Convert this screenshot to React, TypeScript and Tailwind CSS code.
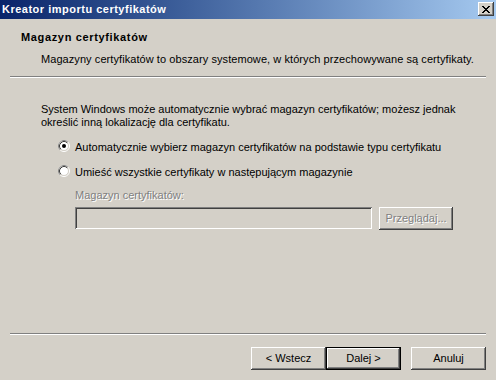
import React from "react";

const raised =
  "shadow-[inset_-1px_-1px_#404040,inset_1px_1px_#ffffff,inset_-2px_-2px_#808080,inset_2px_2px_#d4d0c8]";
const sunken =
  "shadow-[inset_1px_1px_#808080,inset_-1px_-1px_#ffffff,inset_2px_2px_#404040,inset_-2px_-2px_#d4d0c8]";

function Radio({ checked }: { checked?: boolean }) {
  return (
    <svg width="12" height="12" viewBox="0 0 12 12" className="shrink-0">
      <circle cx="6" cy="6" r="5.5" fill="none" stroke="#ffffff" strokeWidth="1" />
      <path d="M2.11 9.89 A5.5 5.5 0 0 1 9.89 2.11" fill="none" stroke="#808080" strokeWidth="1" />
      <circle cx="6" cy="6" r="4.5" fill="#ffffff" stroke="#d4d0c8" strokeWidth="1" />
      <path d="M2.82 9.18 A4.5 4.5 0 0 1 9.18 2.82" fill="none" stroke="#404040" strokeWidth="1" />
      {checked && <circle cx="6" cy="6" r="2" fill="#000000" />}
    </svg>
  );
}

function Btn({ label, def, disabled, className }: { label: string; def?: boolean; disabled?: boolean; className?: string }) {
  return (
    <div
      className={`flex items-center justify-center bg-[#d4d0c8] ${raised} ${def ? "border border-black" : ""} ${className ?? ""}`}
    >
      <span className={disabled ? "text-[#808080] [text-shadow:1px_1px_0_#ffffff]" : "text-black"}>{label}</span>
    </div>
  );
}

export default function App() {
  return (
    <div className="w-[496px] h-[380px] bg-[#d4d0c8] flex flex-col font-['Liberation_Sans',Arial,sans-serif] text-[11px] leading-[13px] text-black overflow-hidden">
      {/* Title bar */}
      <div className="h-[19px] flex items-start bg-gradient-to-r from-[#0a246a] to-[#a6caf0] shrink-0">
        <div className="pl-[2px] pt-[3px] font-bold tracking-[0.5px] text-white flex-1">Kreator importu certyfikatów</div>
        <div className={`mt-[2px] mr-[2px] w-[16px] h-[14px] bg-[#d4d0c8] ${raised} flex items-center justify-center`}>
          <svg width="8" height="7" viewBox="0 0 8 7" shapeRendering="crispEdges">
            <path d="M0 0h2v1h-2zM6 0h2v1h-2zM1 1h2v1h-2zM5 1h2v1h-2zM2 2h4v1h-4zM3 3h2v1h-2zM2 4h4v1h-4zM1 5h2v1h-2zM5 5h2v1h-2zM0 6h2v1h-2zM6 6h2v1h-2z" fill="#000" />
          </svg>
        </div>
      </div>

      {/* Header */}
      <div className="pl-[21px] pt-[12px] font-bold tracking-[0.65px]">Magazyn certyfikatów</div>
      <div className="pl-[41px] mt-[9px] tracking-[0.07px]">
        Magazyny certyfikatów to obszary systemowe, w których przechowywane są certyfikaty.
      </div>
      <div className="mx-[10px] mt-[10px] h-[2px] border-t border-t-[#808080] border-b border-b-white" />

      {/* Body */}
      <div className="pl-[41px] mt-[25px]">
        System Windows może automatycznie wybrać magazyn certyfikatów; możesz jednak
        <br />
        określić inną lokalizację dla certyfikatu.
      </div>
      <div className="pl-[58px] mt-[11px] flex items-start gap-[5px] h-[13px]">
        <Radio checked />
        <span className="mt-[1px]">Automatycznie wybierz magazyn certyfikatów na podstawie typu certyfikatu</span>
      </div>
      <div className="pl-[58px] mt-[12px] flex items-start gap-[5px] h-[13px]">
        <Radio />
        <span className="mt-[1px]">Umieść wszystkie certyfikaty w następującym magazynie</span>
      </div>
      <div className="pl-[75px] mt-[11px] text-[#808080] [text-shadow:1px_1px_0_#ffffff]">Magazyn certyfikatów:</div>
      <div className="pl-[75px] mt-[5px] flex items-start gap-[7px]">
        <div className={`w-[297px] h-[22px] bg-[#d4d0c8] ${sunken}`} />
        <Btn label="Przeglądaj..." disabled className="w-[74px] h-[23px]" />
      </div>

      {/* Bottom */}
      <div className="mt-auto mx-[10px] h-[2px] border-t border-t-[#808080] border-b border-b-white" />
      <div className="mt-[12px] mb-[10px] pr-[10px] flex justify-end h-[23px]">
        <Btn label="< Wstecz" className="w-[75px] h-[23px]" />
        <Btn label="Dalej >" def className="w-[75px] h-[23px]" />
        <Btn label="Anuluj" className="w-[75px] h-[23px] ml-[10px]" />
      </div>
    </div>
  );
}
